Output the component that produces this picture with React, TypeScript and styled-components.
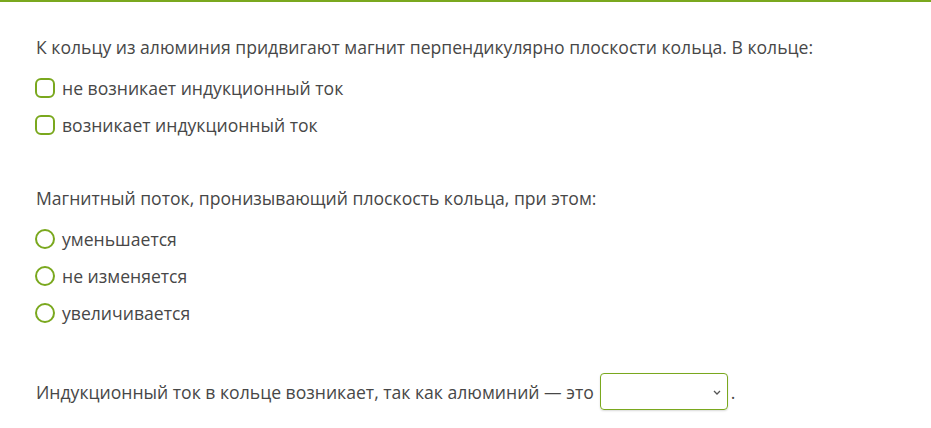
import styled, { createGlobalStyle } from "styled-components";

const GlobalStyle = createGlobalStyle`
  html, body {
    margin: 0;
    padding: 0;
    background: #ffffff;
  }
  body {
    font-family: "Open Sans", "Noto Sans", sans-serif;
    color: #474747;
  }
`;

const green = "#7aa81e";

type Option = { text: string };

const Page = styled.div`
  border-top: 2px solid ${green};
  padding: 32px 36px 20px 35px;
`;

const Block = styled.div`
  display: flex;
  flex-direction: column;
  margin-bottom: 36px;
`;

const Question = styled.p`
  margin: 0 0 15px;
  font-size: 17.6px;
  line-height: 26px;
  padding-left: 1px;
`;

const Item = styled.label`
  display: flex;
  align-items: center;
  gap: 7px;
  font-size: 17.6px;
  line-height: 26px;
  height: 26px;
  margin-bottom: 11px;
`;

// квадратик или кружок
const Mark = styled.span<{ $round?: boolean }>`
  width: 16px;
  height: 16px;
  border: 2px solid ${green};
  border-radius: ${(p) => (p.$round ? "50%" : "6px")};
  flex-shrink: 0;
`;

const Line = styled.div`
  display: flex;
  align-items: center;
  margin-top: 3px;
  font-size: 17.6px;
  padding-left: 1px;
`;

const Select = styled.div`
  width: 121px;
  height: 35px;
  margin: 0 3px 0 6px;
  border: 1px solid ${green};
  border-radius: 4px;
  box-shadow: 0 1px 2px rgba(0, 0, 0, 0.15);
  display: flex;
  align-items: center;
  justify-content: flex-end;
  padding-right: 5px;
  box-sizing: content-box;
`;

const first: Option[] = [
  { text: "не возникает индукционный ток" },
  { text: "возникает индукционный ток" },
];

const second: Option[] = [
  { text: "уменьшается" },
  { text: "не изменяется" },
  { text: "увеличивается" },
];

export default function App() {
  return (
    <>
      <GlobalStyle />
      <Page>
        <Block>
          <Question>
            К кольцу из алюминия придвигают магнит перпендикулярно плоскости кольца. В кольце:
          </Question>
          {first.map((o) => (
            <Item key={o.text}>
              <Mark />
              {o.text}
            </Item>
          ))}
        </Block>

        <Block>
          <Question>Магнитный поток, пронизывающий плоскость кольца, при этом:</Question>
          {second.map((o) => (
            <Item key={o.text}>
              <Mark $round />
              {o.text}
            </Item>
          ))}
        </Block>

        <Line>
          Индукционный ток в кольце возникает, так как алюминий — это
          <Select>
            <svg width="10" height="10" viewBox="0 0 10 10">
              <path d="M2 4 L5 7 L8 4" fill="none" stroke="#555" strokeWidth="1.3" />
            </svg>
          </Select>
          .
        </Line>
      </Page>
    </>
  );
}
